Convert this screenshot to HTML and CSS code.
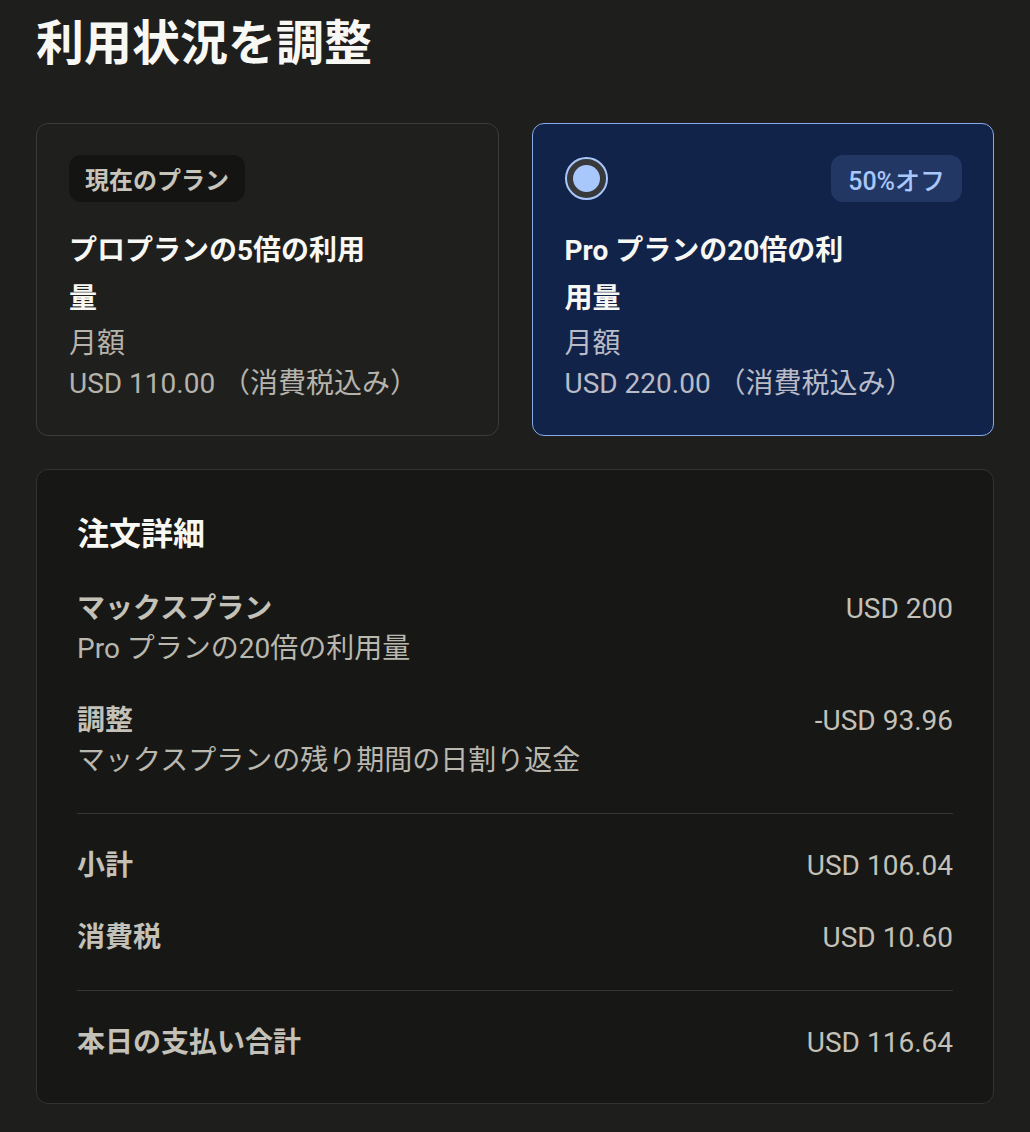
FILE: index.html
```html
<!DOCTYPE html>
<html lang="ja">
<head>
<meta charset="utf-8">
<link rel="stylesheet" href="styles.css">
</head>
<body>
<div class="page">
  <h1 class="page-title">利用状況を調整</h1>
  <div class="plans">
    <div class="plan">
      <div class="plan-top">
        <span class="badge badge-current">現在のプラン</span>
      </div>
      <div class="plan-name">プロプランの5倍の利用量</div>
      <div class="plan-meta first">月額</div>
      <div class="plan-meta">USD 110.00 （消費税込み）</div>
    </div>
    <div class="plan plan-selected">
      <div class="plan-top">
        <span class="radio"></span>
        <span class="badge badge-off">50%オフ</span>
      </div>
      <div class="plan-name">Pro プランの20倍の利用量</div>
      <div class="plan-meta first">月額</div>
      <div class="plan-meta">USD 220.00 （消費税込み）</div>
    </div>
  </div>
  <div class="order">
    <h2 class="order-title">注文詳細</h2>
    <div class="row">
      <div class="row-text">
        <div class="row-label">マックスプラン</div>
        <div class="row-sub">Pro プランの20倍の利用量</div>
      </div>
      <div class="row-value">USD 200</div>
    </div>
    <div class="row">
      <div class="row-text">
        <div class="row-label">調整</div>
        <div class="row-sub">マックスプランの残り期間の日割り返金</div>
      </div>
      <div class="row-value">-USD 93.96</div>
    </div>
    <hr class="divider">
    <div class="row">
      <div class="row-label">小計</div>
      <div class="row-value">USD 106.04</div>
    </div>
    <div class="row">
      <div class="row-label">消費税</div>
      <div class="row-value">USD 10.60</div>
    </div>
    <hr class="divider">
    <div class="row">
      <div class="row-label">本日の支払い合計</div>
      <div class="row-value">USD 116.64</div>
    </div>
  </div>
</div>
</body>
</html>
```
FILE: styles.css
```css
* { box-sizing: border-box; }
html, body {
  margin: 0;
  padding: 0;
  background: #1e1e1d;
}
body {
  font-family: Roboto, "Noto Sans CJK JP", sans-serif;
  color: #b9b7ae;
}
.page {
  padding: 15px 36px 0 36px;
  width: 1030px;
}
.page-title {
  margin: 0;
  font-size: 48px;
  line-height: 58px;
  font-weight: 700;
  color: #f7f7f4;
}
.plans {
  margin-top: 50px;
  display: grid;
  grid-template-columns: 1fr 1fr;
  gap: 33px;
}
.plan {
  border: 1px solid #3b3b39;
  border-radius: 12px;
  padding: 31px 31px 31px 32px;
  background: #1f1f1e;
}
.plan-selected {
  background: #12234a;
  border-color: #86a9ea;
}
.plan-top {
  display: flex;
  justify-content: space-between;
  align-items: center;
  height: 47px;
  margin-bottom: 25px;
}
.badge {
  display: inline-flex;
  align-items: center;
  height: 47px;
  padding: 0 16px;
  border-radius: 12px;
  font-size: 24px;
  font-weight: 700;
}
.badge-current {
  background: #141413;
  color: #c6c4bb;
}
.badge-off {
  background: #223764;
  color: #a8c7fa;
  font-weight: 500;
  font-size: 25px;
  padding: 0 17px;
}
.radio {
  width: 43px;
  height: 43px;
  border-radius: 50%;
  border: 2px solid #a8c7fa;
  background: #38393b;
  display: flex;
  align-items: center;
  justify-content: center;
}
.radio::after {
  content: "";
  width: 27px;
  height: 27px;
  border-radius: 50%;
  background: #a8c7fa;
}
.plan-name {
  max-width: 300px;
  font-size: 28px;
  line-height: 48px;
  font-weight: 700;
  color: #f7f7f4;
}
.plan-meta {
  font-size: 28px;
  line-height: 40px;
  color: #b5b3ab;
}
.plan-meta.first {
  margin-top: 1px;
}
.plan-selected .plan-meta {
  color: #b9bcc6;
}
.order {
  margin-top: 33px;
  border: 1px solid #333332;
  border-radius: 12px;
  background: #171716;
  padding: 42px 40px 40px 40px;
  display: flex;
  flex-direction: column;
  gap: 32px;
}
.order-title {
  margin: 0;
  font-size: 32px;
  line-height: 44px;
  font-weight: 700;
  color: #f7f7f4;
  margin-bottom: 1px;
}
.row {
  display: flex;
  justify-content: space-between;
  align-items: flex-start;
}
.row-label {
  font-size: 28px;
  line-height: 40px;
  font-weight: 700;
  color: #c3c1b8;
}
.row-sub {
  font-size: 28px;
  line-height: 40px;
  color: #b9b7ae;
}
.row-value {
  font-size: 28px;
  line-height: 40px;
  color: #c3c1b8;
}
.divider {
  margin: 0;
  border: 0;
  height: 1px;
  background: #353533;
}
```
